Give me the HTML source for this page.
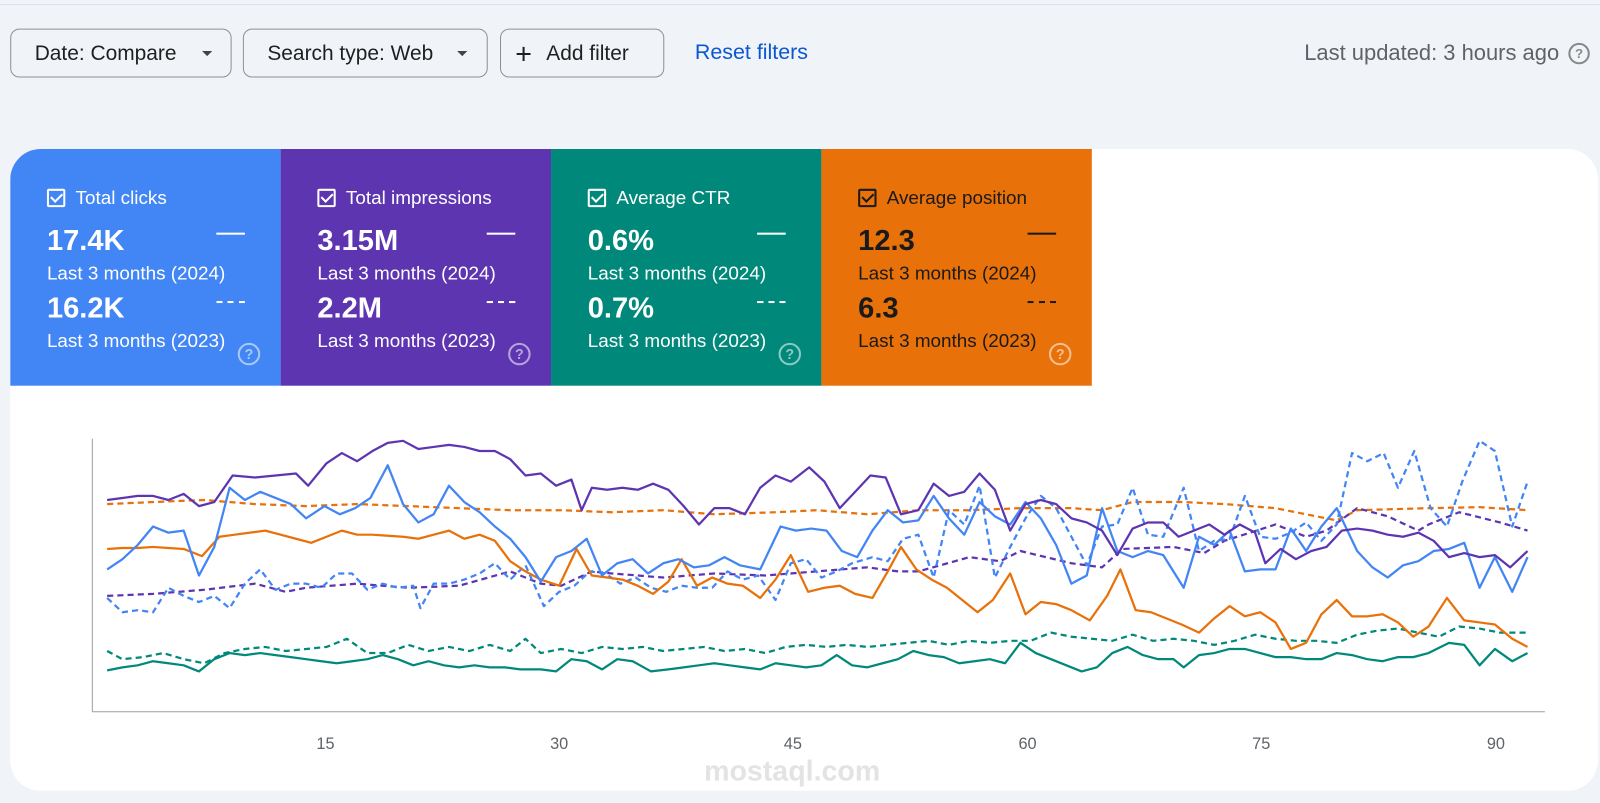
<!DOCTYPE html>
<html><head><meta charset="utf-8"><style>
*{box-sizing:border-box;margin:0;padding:0}
body{width:1600px;height:803px;background:#f0f4f9;font-family:"Liberation Sans",Arial,sans-serif;position:relative;overflow:hidden}
#w{position:absolute;left:0;top:0;width:1568px;height:787px;transform:scale(1.0204);transform-origin:0 0}
.topline{position:absolute;left:0;right:0;top:4px;height:1px;background:#dde1e6}
.btn{position:absolute;top:28px;height:48px;border:1px solid #8e918f;border-radius:9px;font-size:20.5px;color:#1f1f1f;display:flex;align-items:center;padding-left:23px;padding-top:2px}
.caret{position:absolute;top:21px;width:0;height:0;border-left:5px solid transparent;border-right:5px solid transparent;border-top:5px solid #444}
.reset{position:absolute;left:681px;top:40px;font-size:21px;color:#0b57d0}
.upd{position:absolute;right:40px;top:40px;font-size:21.5px;color:#5f6368}
.q{position:absolute;width:21px;height:21px;border:2px solid #888;border-radius:50%;font-size:13px;font-weight:bold;text-align:center;line-height:17px;color:#888}
.card{position:absolute;left:10px;top:146px;width:1556px;height:629px;background:#fff;border-radius:30px;overflow:hidden}
.tile{position:absolute;top:0;width:265px;height:232px;color:#fff}
.tile .t{position:absolute;left:36px;top:37px;font-size:18.5px;display:flex;align-items:center}
.cb{width:18px;height:18px;border:2px solid currentColor;border-radius:2px;margin-right:10px;position:relative}
.cb:after{content:"";position:absolute;left:4px;top:0px;width:5px;height:9px;border-right:2px solid currentColor;border-bottom:2px solid currentColor;transform:rotate(45deg)}
.v{position:absolute;left:36px;font-size:28.5px;font-weight:bold}
.s{position:absolute;left:36px;font-size:18.5px}
.ln{position:absolute;left:202px;width:28px;height:2px;background:currentColor}
.dl{position:absolute;left:202px;width:28px;height:2px;background:repeating-linear-gradient(90deg,currentColor 0 6px,transparent 6px 11px)}
.tq{position:absolute;left:223px;top:190px;width:22px;height:22px;border:2px solid rgba(255,255,255,.55);border-radius:50%;font-size:14px;font-weight:bold;text-align:center;line-height:18px;color:rgba(255,255,255,.55)}
.ax{font-size:16px;fill:#5f6368;font-family:"Liberation Sans",Arial,sans-serif}
</style></head><body><div id="w">
<div class="topline"></div>
<div class="btn" style="left:10px;width:217px">Date: Compare<span class="caret" style="left:187px"></span></div>
<div class="btn" style="left:238px;width:240px">Search type: Web<span class="caret" style="left:209px"></span></div>
<div class="btn" style="left:490px;width:161px;padding-left:14px"><span style="font-size:28px;font-weight:300;margin-right:14px;line-height:1">+</span>Add filter</div>
<div class="reset">Reset filters</div>
<div class="upd">Last updated: 3 hours ago</div>
<div class="q" style="left:1537px;top:42px">?</div>

<div class="card">
 <div class="tile" style="left:0;background:#4285f4">
  <div class="t"><span class="cb"></span>Total clicks</div>
  <div class="v" style="top:74px">17.4K</div><div class="ln" style="top:82px"></div>
  <div class="s" style="top:111px">Last 3 months (2024)</div>
  <div class="v" style="top:140px">16.2K</div><div class="dl" style="top:149px"></div>
  <div class="s" style="top:177px">Last 3 months (2023)</div><div class="tq">?</div>
 </div>
 <div class="tile" style="left:265px;background:#5e35b1">
  <div class="t"><span class="cb"></span>Total impressions</div>
  <div class="v" style="top:74px">3.15M</div><div class="ln" style="top:82px"></div>
  <div class="s" style="top:111px">Last 3 months (2024)</div>
  <div class="v" style="top:140px">2.2M</div><div class="dl" style="top:149px"></div>
  <div class="s" style="top:177px">Last 3 months (2023)</div><div class="tq">?</div>
 </div>
 <div class="tile" style="left:530px;background:#00897b">
  <div class="t"><span class="cb"></span>Average CTR</div>
  <div class="v" style="top:74px">0.6%</div><div class="ln" style="top:82px"></div>
  <div class="s" style="top:111px">Last 3 months (2024)</div>
  <div class="v" style="top:140px">0.7%</div><div class="dl" style="top:149px"></div>
  <div class="s" style="top:177px">Last 3 months (2023)</div><div class="tq">?</div>
 </div>
 <div class="tile" style="left:795px;background:#e8710a;color:#1a1a1a">
  <div class="t"><span class="cb"></span>Average position</div>
  <div class="v" style="top:74px">12.3</div><div class="ln" style="top:82px"></div>
  <div class="s" style="top:111px">Last 3 months (2024)</div>
  <div class="v" style="top:140px">6.3</div><div class="dl" style="top:149px"></div>
  <div class="s" style="top:177px">Last 3 months (2023)</div><div class="tq">?</div>
 </div>
</div>

<svg style="position:absolute;left:0;top:0" width="1568" height="787">
<line x1="90.5" y1="430" x2="90.5" y2="697" stroke="#9aa0a6" stroke-width="1"/>
<line x1="90" y1="697.5" x2="1514" y2="697.5" stroke="#9aa0a6" stroke-width="1"/>
<g class="ax" text-anchor="middle">
<text x="319" y="734" class="ax">15</text><text x="548" y="734" class="ax">30</text><text x="777" y="734" class="ax">45</text><text x="1007" y="734" class="ax">60</text><text x="1236" y="734" class="ax">75</text><text x="1466" y="734" class="ax">90</text>
</g>
<g fill="none" stroke-width="2.2" stroke-linejoin="round">
<polyline stroke="#e8710a" stroke-dasharray="6,4" points="105,494 150,492 200,490 250,494 300,496 350,494 400,496 450,498 500,500 550,500 600,502 650,500 700,504 760,502 800,500 850,504 900,500 950,500 1000,498 1050,498 1080,500 1110,492 1160,492 1200,494 1250,498 1310,510 1330,500 1400,498 1450,497 1497,500"/>
<polyline stroke="#5e35b1" stroke-dasharray="6,4" points="105,584 150,582 200,578 250,572 280,580 300,576 350,572 400,576 450,574 500,560 530,572 550,574 580,560 600,562 650,566 700,562 750,564 800,560 850,556 880,560 900,560 950,546 980,550 1000,540 1050,552 1080,556 1100,538 1150,536 1180,542 1200,530 1250,514 1280,526 1300,520 1330,498 1360,506 1390,520 1400,514 1430,502 1470,512 1497,520"/>
<polyline stroke="#4285f4" stroke-dasharray="6,4" points="105,586 120,600 135,598 150,600 165,576 180,584 195,590 210,584 225,596 240,572 255,558 270,578 285,572 300,572 315,576 330,562 345,562 360,578 375,572 390,576 405,574 412,596 425,572 440,572 455,568 470,562 485,552 500,568 515,554 533,594 548,580 563,574 578,560 593,562 608,572 623,566 638,576 653,580 668,574 683,576 698,576 713,560 728,568 743,564 760,588 775,552 790,548 805,566 820,560 835,552 855,546 870,550 885,528 900,524 915,566 930,500 945,514 960,476 975,566 990,536 1005,508 1020,486 1035,498 1050,526 1065,554 1080,516 1095,514 1110,478 1125,524 1140,526 1160,478 1175,540 1190,530 1205,528 1220,486 1235,526 1250,528 1265,522 1280,512 1295,530 1310,514 1325,444 1340,452 1356,444 1370,478 1386,442 1402,498 1418,516 1433,472 1450,432 1465,442 1482,516 1497,472"/>
<polyline stroke="#00897b" stroke-dasharray="6,4" points="105,638 120,646 140,644 160,640 180,646 200,650 220,640 240,636 260,634 280,638 300,636 320,634 340,626 360,640 380,640 400,632 420,638 440,634 460,638 480,632 500,638 515,626 530,640 550,636 570,640 590,634 610,636 630,634 650,638 670,636 690,634 710,638 730,636 750,640 770,634 790,632 810,634 830,632 850,634 870,632 890,630 910,628 930,632 950,628 970,630 990,628 1010,628 1030,620 1050,624 1070,626 1090,628 1110,622 1130,628 1150,626 1170,628 1190,632 1210,628 1230,622 1250,626 1270,628 1290,628 1310,630 1330,622 1350,618 1370,616 1390,620 1410,624 1430,614 1450,616 1470,620 1497,620"/>
<polyline stroke="#00897b" points="105,657 120,654 135,652 150,648 165,650 180,652 195,658 210,646 225,640 240,642 255,640 270,642 285,644 300,646 315,648 330,650 345,648 360,646 375,642 390,646 405,652 420,648 435,652 450,654 465,652 480,654 495,654 510,656 530,656 545,658 560,646 575,648 590,656 605,646 620,648 638,658 655,656 670,654 685,652 700,650 715,652 730,654 745,656 760,650 775,652 790,654 805,652 820,642 835,652 850,654 865,650 880,646 895,638 910,642 925,644 940,650 955,648 970,646 985,650 1000,630 1015,640 1030,646 1045,652 1060,658 1075,654 1090,640 1105,634 1120,642 1135,646 1150,646 1160,654 1175,642 1190,640 1205,636 1220,636 1235,640 1250,644 1265,644 1280,646 1295,646 1310,640 1325,642 1340,646 1355,648 1370,644 1385,644 1400,640 1420,630 1435,632 1450,652 1465,636 1482,648 1497,640"/>
<polyline stroke="#e8710a" points="105,538 120,537 135,537 150,536 165,537 180,538 198,545 215,526 230,524 245,522 260,520 275,524 290,528 305,532 320,526 335,520 350,524 365,524 380,525 395,526 410,528 425,524 440,520 455,528 470,524 485,530 500,550 515,560 530,568 548,574 565,538 580,564 595,566 610,568 625,574 640,582 655,570 668,548 683,574 698,566 713,572 728,574 745,586 760,568 775,544 792,580 808,576 823,574 838,582 855,586 870,560 883,536 898,558 913,568 928,576 943,588 958,600 973,588 990,562 1005,602 1020,590 1035,592 1050,598 1068,608 1085,584 1098,558 1113,598 1128,600 1143,606 1158,612 1175,620 1190,606 1205,594 1220,604 1235,600 1250,610 1265,636 1280,630 1295,602 1310,588 1325,604 1340,604 1355,602 1370,610 1385,624 1400,614 1418,586 1435,608 1450,610 1465,612 1482,626 1497,634"/>
<polyline stroke="#4285f4" points="105,558 120,548 135,534 150,516 165,522 180,520 195,564 210,536 225,478 240,490 255,482 270,488 285,494 300,508 318,496 333,504 348,498 363,488 380,456 395,494 410,512 425,504 440,476 455,492 470,502 485,516 500,528 515,546 530,570 545,546 560,540 575,528 590,564 605,552 620,548 635,562 650,552 665,548 680,556 695,554 710,546 725,554 745,558 765,516 780,520 795,518 810,520 825,540 840,546 855,520 870,500 885,512 900,510 915,486 930,508 945,524 960,492 975,506 990,514 1005,492 1020,508 1035,534 1050,572 1065,564 1080,498 1095,540 1110,546 1125,540 1140,544 1160,576 1175,526 1190,534 1205,520 1220,560 1235,558 1250,558 1265,518 1280,540 1295,516 1310,498 1330,540 1345,556 1360,566 1375,554 1390,550 1405,540 1420,538 1435,532 1450,576 1465,546 1482,580 1497,546"/>
<polyline stroke="#5e35b1" points="105,490 120,488 135,486 150,486 165,490 180,484 195,496 210,492 228,466 250,468 270,466 290,464 302,476 320,454 335,444 350,452 365,442 380,434 395,432 410,440 425,438 440,436 455,438 470,442 485,442 500,450 515,466 530,464 545,476 560,470 570,500 580,478 595,480 610,478 625,480 640,474 655,480 670,496 685,514 700,498 715,498 730,504 745,478 760,466 775,472 793,458 808,472 823,498 838,482 853,466 868,468 883,504 900,500 915,474 930,486 945,482 960,464 975,480 990,520 1005,494 1020,490 1035,494 1050,508 1065,512 1080,520 1095,544 1110,518 1125,512 1140,512 1155,526 1170,520 1185,514 1200,524 1215,514 1230,522 1240,552 1255,538 1270,548 1285,540 1300,536 1315,520 1330,518 1345,520 1360,524 1375,526 1390,522 1405,530 1420,546 1435,542 1450,546 1465,544 1480,556 1497,540"/>
</g>
<text x="690" y="765" font-size="28" font-weight="bold" fill="#e3e3e3" font-family="Liberation Sans,Arial,sans-serif">mostaql.com</text>
</svg>
</div></body></html>
